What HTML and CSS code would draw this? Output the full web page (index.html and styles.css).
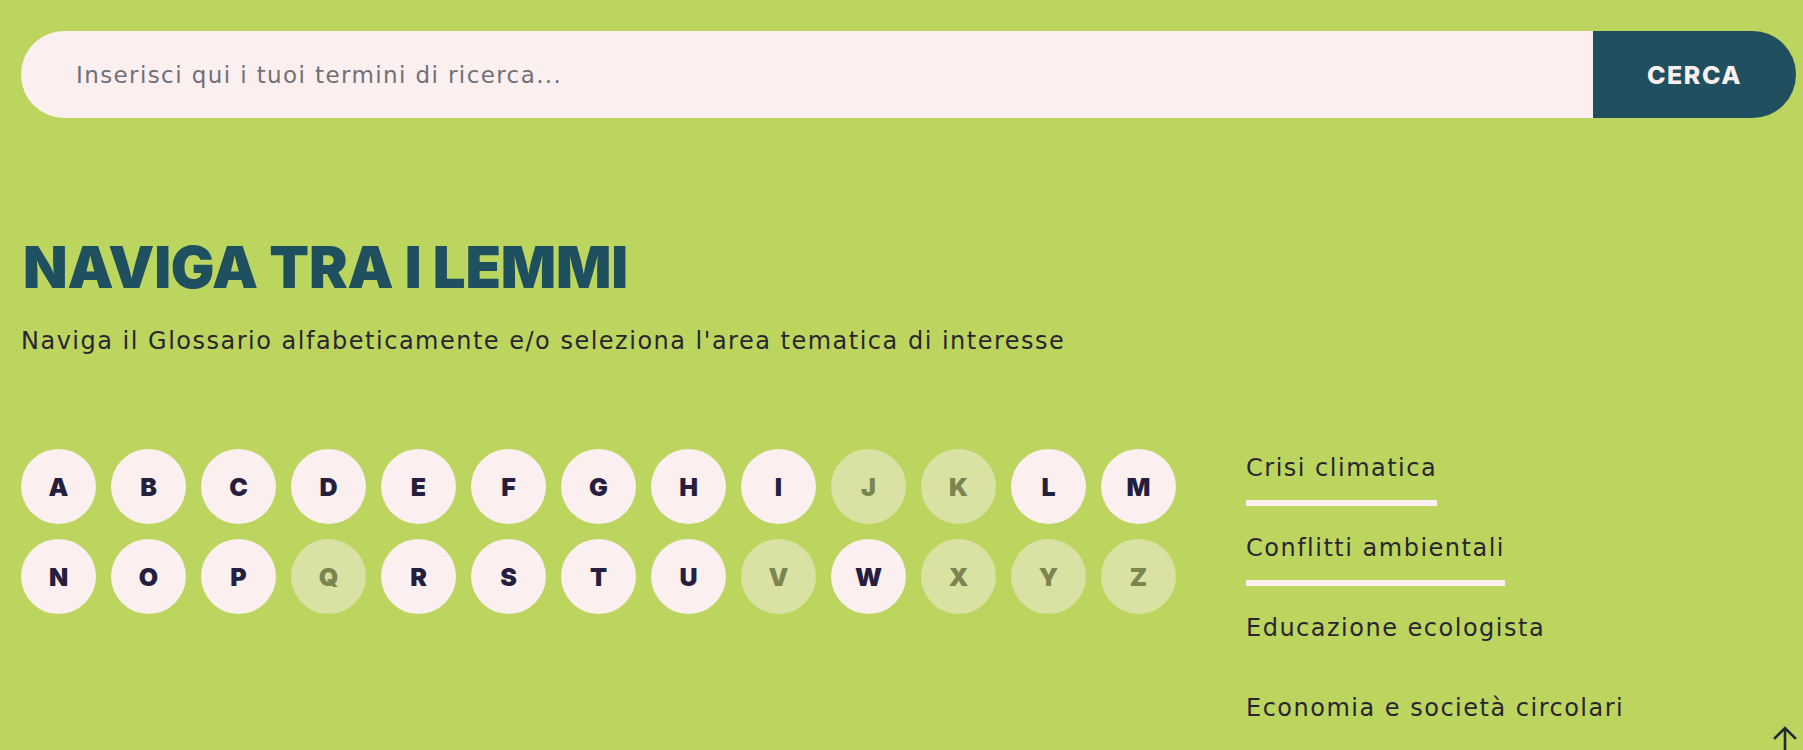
FILE: index.html
```html
<!DOCTYPE html>
<html lang="it">
<head>
<meta charset="utf-8">
<title>Glossario</title>
<link rel="stylesheet" href="styles.css">
</head>
<body>
<div class="page">
  <form class="search">
    <input class="search-input" type="text" placeholder="Inserisci qui i tuoi termini di ricerca...">
    <button class="search-btn" type="button">CERCA</button>
  </form>

  <h1 class="title">NAVIGA TRA I LEMMI</h1>
  <p class="subtitle">Naviga il Glossario alfabeticamente e/o seleziona l'area tematica di interesse</p>

  <div class="browse">
    <div class="letters">
      <a class="letter">A</a><a class="letter">B</a><a class="letter">C</a><a class="letter">D</a><a class="letter">E</a><a class="letter">F</a><a class="letter">G</a><a class="letter">H</a><a class="letter">I</a><a class="letter off">J</a><a class="letter off">K</a><a class="letter">L</a><a class="letter">M</a>
      <a class="letter">N</a><a class="letter">O</a><a class="letter">P</a><a class="letter off">Q</a><a class="letter">R</a><a class="letter">S</a><a class="letter">T</a><a class="letter">U</a><a class="letter off">V</a><a class="letter">W</a><a class="letter off">X</a><a class="letter off">Y</a><a class="letter off">Z</a>
    </div>
    <ul class="topics">
      <li class="topic active"><span>Crisi climatica</span></li>
      <li class="topic active"><span>Conflitti ambientali</span></li>
      <li class="topic"><span>Educazione ecologista</span></li>
      <li class="topic"><span>Economia e società circolari</span></li>
    </ul>
  </div>
</div>
<a class="to-top" aria-label="Torna su">
  <svg width="26" height="26" viewBox="0 0 26 26"><path d="M13 25V3M3 12L13 2L23 12" fill="none" stroke="#1f2a33" stroke-width="2.6" stroke-linecap="square"/></svg>
</a>
</body>
</html>
```

FILE: styles.css
```css
html, body {
  margin: 0;
  padding: 0;
  background: #bcd55e;
  height: 100%;
  overflow: hidden;
}
body {
  font-family: "DejaVu Sans", sans-serif;
  color: #2a2530;
}
.page {
  padding: 31px 7px 0 21px;
}
.search {
  display: flex;
  height: 87px;
  margin: 0;
}
.search-input {
  flex: 1;
  border: 0;
  outline: 0;
  background: #fcefef;
  border-radius: 44px 0 0 44px;
  padding: 0 0 0 55px;
  font-family: "DejaVu Sans", sans-serif;
  font-size: 23px;
  letter-spacing: 1.4px;
  color: #333;
}
.search-input::placeholder {
  color: #6f7177;
}
.search-btn {
  width: 203px;
  border: 0;
  background: #20505f;
  color: #fcefef;
  border-radius: 0 44px 44px 0;
  font-family: "Inter", sans-serif;
  font-weight: 800;
  font-size: 25px;
  letter-spacing: 1.5px;
  padding: 0;
}
.title {
  margin: 120px 0 0 2px;
  font-family: "Inter", sans-serif;
  font-weight: 900;
  font-size: 58px;
  line-height: 58px;
  color: #1f5060;
  letter-spacing: -0.2px;
}
.subtitle {
  margin: 30px 0 0 0;
  font-size: 24px;
  line-height: 30px;
  letter-spacing: 1.5px;
  color: #2a2530;
}
.browse {
  display: flex;
  align-items: flex-start;
  margin-top: 93px;
}
.letters {
  display: grid;
  grid-template-columns: repeat(13, 75px);
  grid-auto-rows: 75px;
  gap: 15px;
}
.letter {
  width: 75px;
  height: 75px;
  border-radius: 50%;
  background: #fcefef;
  color: #241f3e;
  display: flex;
  align-items: center;
  justify-content: center;
  font-family: "Inter", sans-serif;
  font-weight: 900;
  font-size: 25px;
}
.letter.off {
  background: #d9e2a2;
  color: #7a8550;
}
.topics {
  list-style: none;
  margin: 0 0 0 70px;
  padding: 0;
}
.topic {
  height: 80px;
  font-size: 24px;
  line-height: 34px;
  letter-spacing: 1.5px;
  color: #2a2530;
}
.topic span {
  display: inline-block;
  padding-top: 2px;
}
.topic.active span {
  border-bottom: 6px solid #fcefef;
  padding-bottom: 15px;
  margin-right: -1.5px;
}
.to-top {
  position: fixed;
  right: 5px;
  bottom: -6px;
}
```
